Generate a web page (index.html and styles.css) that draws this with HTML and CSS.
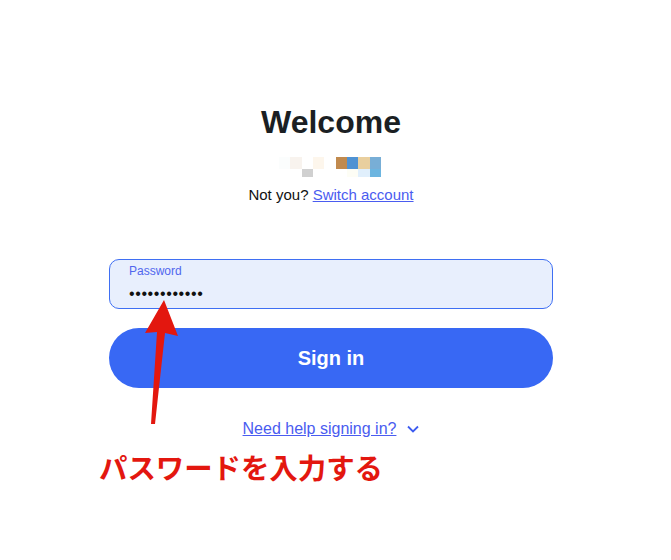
FILE: index.html
```html
<!DOCTYPE html>
<html lang="ja">
<head>
    <meta charset="UTF-8">
    <meta name="viewport" content="width=device-width, initial-scale=1.0">
    <title>Sign in</title>
    <link rel="stylesheet" href="styles.css">
</head>
<body>
    <div class="login">
        <h1 class="title">Welcome</h1>

        <!-- blurred account avatar / email -->
        <div class="mosaic">
            <span style="background:#fbfdfd"></span>
            <span style="background:#f8f3ee"></span>
            <span></span>
            <span style="background:#fdf6ec"></span>
            <span></span>
            <span style="background:#c18a4e"></span>
            <span style="background:#4f92d3"></span>
            <span style="background:#e9cf9e"></span>
            <span style="background:#78aed6"></span>
            <span></span>
            <span></span>
            <span style="background:#d0d0d0"></span>
            <span></span>
            <span></span>
            <span></span>
            <span style="background:#fdfdf5"></span>
            <span style="background:#e0effc"></span>
            <span style="background:#6cb5e0"></span>
        </div>

        <p class="not-you">Not you? <a href="#">Switch account</a></p>

        <form class="form" onsubmit="return false">
            <label class="field">
                <span class="field-label">Password</span>
                <span class="field-value">••••••••••••</span>
            </label>
            <button class="btn-primary" type="submit">Sign in</button>
        </form>

        <div class="help">
            <a href="#">Need help signing in?</a>
            <svg class="chevron" width="12" height="8" viewBox="0 0 12 8">
                <path d="M1 1.5 L6 6.5 L11 1.5" fill="none" stroke="#3d5cf0" stroke-width="1.8"/>
            </svg>
        </div>
    </div>

    <!-- annotation overlay -->
    <svg class="note-arrow" width="671" height="560" viewBox="0 0 671 560">
        <polygon points="164,300 178,336 165,333 155,424 151,424 157,332 145,333" fill="#e3170f"/>
    </svg>
    <div class="note-text">パスワードを入力する</div>
</body>
</html>
```

FILE: styles.css
```css
* {
    margin: 0;
    padding: 0;
    box-sizing: border-box;
}

body {
    font-family: "Liberation Sans", Arial, sans-serif;
    background: #fff;
    color: #1b1f23;
    position: relative;
    width: 671px;
    height: 560px;
    overflow: hidden;
}

.login {
    width: 444px;
    margin-left: 109px;
    padding-top: 104px;
    display: flex;
    flex-direction: column;
    align-items: center;
}

.title {
    font-size: 32px;
    line-height: 36px;
    font-weight: 700;
    color: #1b1f23;
}

.mosaic {
    margin-top: 17px;
    display: grid;
    grid-template-columns: repeat(9, 11.4px);
    grid-template-rows: 12px 8px;
    margin-left: -2px;
}

.not-you {
    margin-top: 9px;
    font-size: 15px;
    line-height: 18px;
    color: #111;
}

.not-you a,
.help a {
    color: #4a5cf0;
    text-decoration: underline;
}

.form {
    margin-top: 55px;
    width: 100%;
    display: flex;
    flex-direction: column;
    gap: 19px;
}

.field {
    height: 50px;
    border: 1px solid #3f6ff3;
    border-radius: 10px;
    background: #e8effd;
    padding: 4px 19px 0;
    display: flex;
    flex-direction: column;
}

.field-label {
    font-size: 12px;
    line-height: 14px;
    color: #5066ee;
}

.field-value {
    margin-top: 8px;
    font-size: 16px;
    line-height: 16px;
    letter-spacing: 0.6px;
    color: #111;
}

.btn-primary {
    height: 60px;
    border: none;
    border-radius: 30px;
    background: #3868f4;
    color: #fff;
    font-family: inherit;
    font-size: 20px;
    font-weight: 700;
    cursor: pointer;
}

.help {
    margin-top: 31px;
    display: flex;
    align-items: center;
    gap: 11px;
    font-size: 16px;
    line-height: 20px;
}

.chevron {
    display: block;
}

.note-arrow {
    position: absolute;
    left: 0;
    top: 0;
    pointer-events: none;
}

.note-text {
    position: absolute;
    left: 99px;
    top: 452px;
    font-family: "Noto Sans CJK JP", sans-serif;
    font-size: 28.4px;
    line-height: 29px;
    font-weight: 700;
    color: #e3170f;
}
```
